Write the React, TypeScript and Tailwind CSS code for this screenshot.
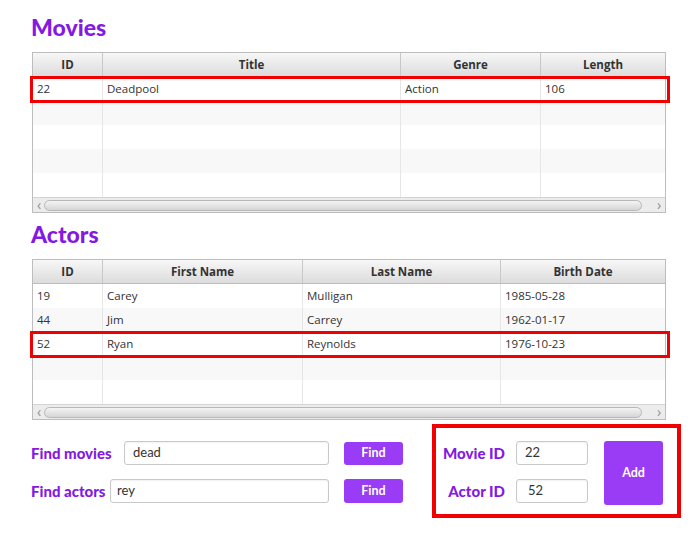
import type { ReactNode } from "react";

type Col = { label: string; width: number };

const MOVIE_COLS: Col[] = [
  { label: "ID", width: 70 },
  { label: "Title", width: 298 },
  { label: "Genre", width: 140 },
  { label: "Length", width: 124 },
];

const ACTOR_COLS: Col[] = [
  { label: "ID", width: 70 },
  { label: "First Name", width: 200 },
  { label: "Last Name", width: 198 },
  { label: "Birth Date", width: 164 },
];

const MOVIES = [["22", "Deadpool", "Action", "106"]];

const ACTORS = [
  ["19", "Carey", "Mulligan", "1985-05-28"],
  ["44", "Jim", "Carrey", "1962-01-17"],
  ["52", "Ryan", "Reynolds", "1976-10-23"],
];

function Title({ children }: { children: ReactNode }) {
  return (
    <h2 className="h-[30px] pl-[31px] text-[23px] leading-[30px] font-black text-[#8419e4] [font-family:Lato,sans-serif]">
      {children}
    </h2>
  );
}

function ScrollBar() {
  return (
    <div className="flex h-[15px] items-center border-t border-[#d4d4d4] bg-[#ececec]">
      <span className="w-[12px] text-center text-[14px] leading-none text-[#909090]">‹</span>
      <div className="ml-[-1px] h-[11px] w-[598px] rounded-full border border-[#b8b8b8] bg-gradient-to-b from-[#f4f4f4] to-[#d6d6d6]" />
      <span className="ml-auto w-[12px] text-center text-[14px] leading-none text-[#909090]">›</span>
    </div>
  );
}

function DataTable({ cols, rows, selected }: { cols: Col[]; rows: string[][]; selected: number }) {
  const padded = [...rows];
  while (padded.length < 5) padded.push(cols.map(() => ""));
  return (
    <div className="ml-[32px] w-[634px] border border-[#bdbdbd] bg-white [font-family:'Open_Sans',sans-serif] text-[11.5px] text-[#333]">
      <div className="flex h-[24px] border-b border-[#bdbdbd] bg-gradient-to-b from-[#f7f7f7] to-[#dcdcdc]">
        {cols.map((c, i) => (
          <div
            key={c.label}
            style={{ width: c.width }}
            className={"flex items-center justify-center font-bold " + (i < cols.length - 1 ? "border-r border-[#c8c8c8]" : "")}
          >
            {c.label}
          </div>
        ))}
      </div>
      {padded.map((r, ri) => (
        <div key={ri} className={"relative flex h-[24px] " + (ri % 2 === 1 ? "bg-[#f8f8f8]" : "bg-white")}>
          {r.map((v, ci) => (
            <div
              key={ci}
              style={{ width: cols[ci].width }}
              className={"flex items-center pl-[4px] " + (ci < cols.length - 1 ? "border-r border-[#e6e6e6]" : "")}
            >
              {v}
            </div>
          ))}
          {ri === selected && (
            <span className="pointer-events-none absolute -top-[1px] -bottom-[2px] -left-[3px] -right-[5px] z-10 border-[3px] border-[#f00000]" />
          )}
        </div>
      ))}
      <ScrollBar />
    </div>
  );
}

function Field({ value, width, pad = "pl-[8px]" }: { value: string; width: string; pad?: string }) {
  return (
    <div
      className={
        "flex h-[24px] items-center rounded-[3px] border border-[#c9c9c9] bg-white text-[13px] text-[#333] shadow-[inset_0_1px_2px_rgba(0,0,0,0.06)] " +
        width +
        " " +
        pad
      }
    >
      {value}
    </div>
  );
}

function PurpleButton({ children, className }: { children: ReactNode; className: string }) {
  return (
    <button
      type="button"
      className={"flex items-center justify-center rounded-[3px] bg-[#9a3bf6] text-[12.5px] font-bold text-white " + className}
    >
      {children}
    </button>
  );
}

const LABEL = "text-[15px] font-black text-[#8419e4]";

export default function App() {
  return (
    <div className="h-[534px] w-[691px] bg-white pt-[12px] [font-family:Lato,sans-serif]">
      <Title>Movies</Title>
      <div className="mt-[10px]">
        <DataTable cols={MOVIE_COLS} rows={MOVIES} selected={0} />
      </div>

      <div className="mt-[6px]">
        <Title>Actors</Title>
      </div>
      <div className="mt-[10px]">
        <DataTable cols={ACTOR_COLS} rows={ACTORS} selected={2} />
      </div>

      <div className="mt-[4px] flex items-start">
        <div className="ml-[31px] mt-[17px] flex w-[372px] flex-col gap-[14px]">
          <div className="flex items-center">
            <span className={LABEL}>Find movies</span>
            <div className="ml-auto">
              <Field value="dead" width="w-[205px]" />
            </div>
            <PurpleButton className="ml-[15px] h-[23px] w-[59px]">Find</PurpleButton>
          </div>
          <div className="flex items-center">
            <span className={LABEL}>Find actors</span>
            <div className="ml-auto">
              <Field value="rey" width="w-[219px]" pad="pl-[6px]" />
            </div>
            <PurpleButton className="ml-[15px] h-[24px] w-[59px]">Find</PurpleButton>
          </div>
        </div>

        <div className="ml-[29px] flex h-[94px] w-[249px] items-start border-4 border-[#f00000] pt-[13px] pl-[7px]">
          <div className="flex flex-col gap-[14px]">
            <div className="flex items-center">
              <span className={"w-[62px] text-right " + LABEL}>Movie ID</span>
              <div className="ml-[11px]">
                <Field value="22" width="w-[72px]" />
              </div>
            </div>
            <div className="flex items-center">
              <span className={"w-[62px] text-right " + LABEL}>Actor ID</span>
              <div className="ml-[11px]">
                <Field value="52" width="w-[72px]" pad="pl-[11px]" />
              </div>
            </div>
          </div>
          <PurpleButton className="ml-[16px] h-[64px] w-[59px]">Add</PurpleButton>
        </div>
      </div>
    </div>
  );
}
